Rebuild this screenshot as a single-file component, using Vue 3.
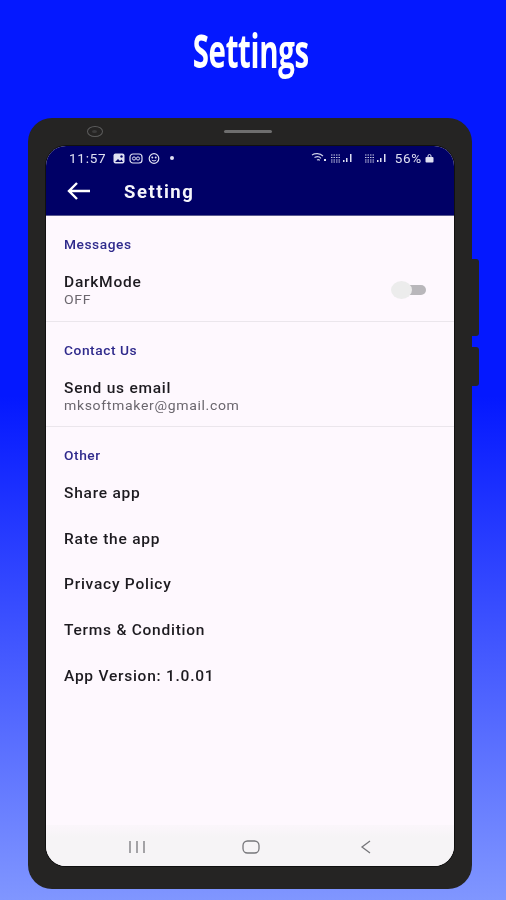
<script setup>
const sections = [
  { title: 'Messages', rows: [{ name: 'DarkMode', sub: 'OFF', toggle: true }] },
  { title: 'Contact Us', rows: [{ name: 'Send us email', sub: 'mksoftmaker@gmail.com' }] },
  {
    title: 'Other',
    rows: [
      { name: 'Share app' },
      { name: 'Rate the app' },
      { name: 'Privacy Policy' },
      { name: 'Terms & Condition' },
      { name: 'App Version: 1.0.01' }
    ]
  }
]
</script>

<template>
  <div class="page">
    <header class="hero"><h1>Settings</h1></header>
    <div class="phone">
      <span class="camera"></span>
      <span class="speaker"></span>
      <span class="side side-a"></span>
      <span class="side side-b"></span>
      <div class="screen">
        <div class="status">
          <div class="status-left">
            <span class="time">11:57</span>
            <svg width="12" height="11" viewBox="0 0 12 11"><rect x=".5" y=".5" width="11" height="10" rx="2" fill="#dfe0f2"/><path d="M2 9l3-3 2 2 1.500-1.500L10 9z" fill="#000066"/><circle cx="8.500" cy="3.500" r="1.200" fill="#000066"/></svg>
            <svg width="14" height="11" viewBox="0 0 14 11"><rect x="1" y="1" width="12" height="9" rx="3" fill="none" stroke="#dfe0f2" stroke-width="1.200"/><circle cx="5" cy="5.500" r="1.600" fill="none" stroke="#dfe0f2"/><circle cx="9" cy="5.500" r="1.600" fill="none" stroke="#dfe0f2"/></svg>
            <svg width="14" height="11" viewBox="0 0 14 11"><circle cx="7" cy="5.500" r="4.800" fill="none" stroke="#dfe0f2" stroke-width="1.200"/><circle cx="5.300" cy="4.500" r="1" fill="#dfe0f2"/><circle cx="8.700" cy="4.500" r="1" fill="#dfe0f2"/><path d="M4.800 7c1.200 1.200 3.200 1.200 4.400 0" fill="none" stroke="#dfe0f2"/></svg>
            <span class="dot"></span>
          </div>
          <div class="status-right">
            <svg width="16" height="10" viewBox="0 0 16 10"><path d="M1 2c3-2 8-2 11 1M3.500 4.500c2-1 5-1 6.500.8M6 7c1-.5 2-.4 2.800.4" fill="none" stroke="#c9cbe6" stroke-width="1.100"/><rect x="13" y="6" width="2" height="2" fill="#dfe0f2"/></svg>
            <svg width="24" height="10" viewBox="0 0 24 10"><path d="M1 2h9M1 4.500h9M1 7h9M1 9h9" stroke="#c9cbe6" stroke-width="1.100" stroke-dasharray="1.500 1"/><path d="M13 9V7h1.500v2zM16 9V5h1.500v4zM20 9V1h1.500v8z" fill="#dfe0f2"/></svg>
            <svg class="sig" width="24" height="10" viewBox="0 0 24 10"><path d="M1 2h9M1 4.500h9M1 7h9M1 9h9" stroke="#c9cbe6" stroke-width="1.100" stroke-dasharray="1.500 1"/><path d="M13 9V7h1.500v2zM16 9V5h1.500v4zM20 9V1h1.500v8z" fill="#dfe0f2"/></svg>
            <span class="battery">56%</span>
            <svg width="9" height="9" viewBox="0 0 9 9"><path d="M3 3V2a1.500 1.500 0 0 1 3 0v1" fill="none" stroke="#dfe0f2"/><rect x=".5" y="3" width="8" height="5.500" rx="1" fill="#dfe0f2"/></svg>
          </div>
        </div>
        <div class="appbar">
          <svg class="back" width="26" height="20" viewBox="0 0 26 20"><path d="M24 10H3M11 2l-8 8 8 8" fill="none" stroke="#fff" stroke-width="2.400"/></svg>
          <span class="appbar-title">Setting</span>
        </div>
        <main class="content">
          <section v-for="s in sections" :key="s.title" class="section">
            <h2>{{ s.title }}</h2>
            <div v-for="r in s.rows" :key="r.name" class="row" :class="{ double: r.sub }">
              <div>
                <div class="name">{{ r.name }}</div>
                <div v-if="r.sub" class="sub">{{ r.sub }}</div>
              </div>
              <div v-if="r.toggle" class="toggle"><span class="knob"></span></div>
            </div>
          </section>
        </main>
        <nav class="navbar">
          <svg width="18" height="14" viewBox="0 0 18 14"><path d="M2 1v12M9 1v12M16 1v12" stroke="#77777b" stroke-width="1.300"/></svg>
          <svg width="18" height="14" viewBox="0 0 18 14"><rect x="1" y="1" width="16" height="12" rx="4.500" fill="none" stroke="#77777b" stroke-width="1.300"/></svg>
          <svg width="18" height="14" viewBox="0 0 18 14"><path d="M14 1L6 7l8 6" fill="none" stroke="#77777b" stroke-width="1.300"/></svg>
        </nav>
      </div>
    </div>
  </div>
</template>

<style>
html, body { margin: 0; padding: 0; }
</style>

<style scoped>
.page {
  width: 506px;
  height: 900px;
  overflow: hidden;
  background: linear-gradient(180deg, #0418ff 0%, #0418ff 44%, #8096ff 100%);
  font-family: Roboto, "Liberation Sans", sans-serif;
  filter: blur(.35px);
}
.hero {
  height: 118px;
  display: flex;
  justify-content: center;
}
.hero h1 {
  margin: 22px 5px 0 0;
  height: 60px;
  font: 700 46px/56px "Open Sans", sans-serif;
  color: #fff;
  transform: scaleX(.64);
  letter-spacing: -.5px;
}
.phone {
  position: relative;
  box-sizing: border-box;
  margin-left: 28px;
  width: 444px;
  height: 771px;
  padding: 28px 18px 23px;
  background: #252423;
  border-radius: 24px;
}
.camera {
  position: absolute;
  left: 59px;
  top: 8px;
  width: 16px;
  height: 11px;
  box-sizing: border-box;
  border: 1.500px solid #5d5d5d;
  border-radius: 50%;
}
.camera::after {
  content: '';
  position: absolute;
  left: 4px;
  top: 2.500px;
  width: 5px;
  height: 3px;
  border-radius: 50%;
  background: #3c3c3c;
}
.speaker {
  position: absolute;
  left: 196px;
  top: 12px;
  width: 48px;
  height: 3px;
  border-radius: 2px;
  background: #6e6e6e;
}
.side {
  position: absolute;
  left: 444px;
  width: 7px;
  background: #252423;
  border-radius: 0 3px 3px 0;
}
.side-a { top: 141px; height: 77px; }
.side-b { top: 229px; height: 39px; }
.screen {
  height: 720px;
  display: flex;
  flex-direction: column;
  border-radius: 20px;
  overflow: hidden;
  background: #fef8fe;
  box-shadow: 0 0 0 1px #101010;
}
.status {
  height: 24px;
  flex: none;
  box-sizing: border-box;
  padding: 0 20px 0 23px;
  display: flex;
  align-items: center;
  justify-content: space-between;
  background: #000066;
  color: #dfe0f2;
  font-size: 13.500px;
  letter-spacing: .75px;
}
.status-left, .status-right {
  display: flex;
  align-items: center;
}
.status-left { gap: 4px; }
.status-left .time { margin-right: 3px; }
.status-right { gap: 3px; }
.sig { margin-left: 7px; }
.battery { margin-left: 4px; margin-right: 0; }
.dot {
  width: 4px;
  height: 4px;
  margin-left: 5px;
  border-radius: 50%;
  background: #dfe0f2;
}
.appbar {
  height: 46px;
  flex: none;
  display: flex;
  align-items: center;
  background: #000066;
  border-bottom: 1px solid #5a5a90;
  box-sizing: border-box;
}
.back { margin-left: 20px; margin-top: -4px; }
.appbar-title {
  margin-left: 32px;
  margin-top: -2px;
  color: #f5f5fb;
  font-size: 18.500px;
  font-weight: 700;
  letter-spacing: 1.500px;
}
.content {
  flex: 1;
  padding-top: 21px;
}
.section { border-bottom: 1px solid #ebe6ec; }
.section:last-child { border-bottom: 0; }
.section:last-child h2 { margin-bottom: 7px; }
.section + .section { padding-top: 21px; }
.section h2 {
  margin: 0;
  padding-left: 18px;
  font-size: 12.500px;
  line-height: 16px;
  font-weight: 500;
  letter-spacing: .5px;
  color: #2f2a8c;
  transform: scaleX(1.1);
  transform-origin: 18px 50%;
}
.row {
  height: 45.700px;
  padding: 0 28px 0 18px;
  display: flex;
  align-items: center;
  justify-content: space-between;
  box-sizing: border-box;
}
.row.double {
  height: 67.500px;
  padding-top: 7.500px;
}
.row.double .toggle { margin-top: -1px; }
.name {
  font-size: 14.500px;
  line-height: 18px;
  font-weight: 500;
  letter-spacing: .7px;
  color: #1d1b20;
  transform: scaleX(1.07);
  transform-origin: 0 50%;
}
.sub {
  font-size: 13px;
  line-height: 15px;
  letter-spacing: .6px;
  color: #6b676e;
  transform: scaleX(1.08);
  transform-origin: 0 50%;
}
.toggle {
  position: relative;
  width: 34px;
  height: 10px;
  border-radius: 6px;
  background: #b9b7bb;
}
.knob {
  position: absolute;
  left: -1px;
  top: -4px;
  width: 21px;
  height: 18px;
  border-radius: 50%;
  background: #ececec;
}
.navbar {
  height: 41px;
  flex: none;
  padding-top: 3px;
  box-sizing: border-box;
  display: flex;
  align-items: center;
  justify-content: space-between;
  padding-left: 82px;
  padding-right: 80px;
  background: linear-gradient(180deg, #fbf6fb 0%, #f6f4f6 30%);
}
</style>
